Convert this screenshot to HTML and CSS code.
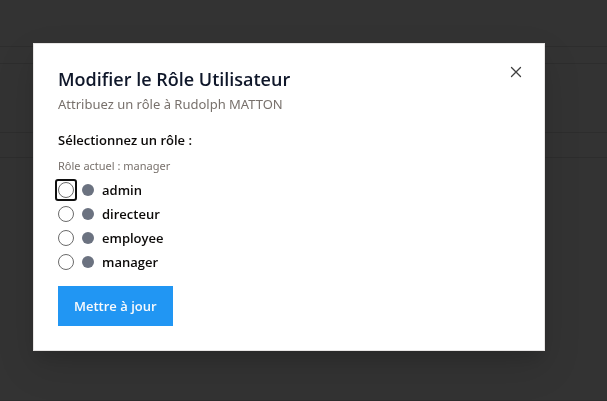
FILE: index.html
```html
<!DOCTYPE html>
<html lang="fr">
<head>
<meta charset="utf-8">
<meta name="viewport" content="width=device-width, initial-scale=1">
<title>Modifier le Rôle Utilisateur</title>
<link rel="stylesheet" href="styles.css">
</head>
<body>
<div class="page" aria-hidden="true">
  <div class="band band-top"></div>
  <div class="band band-gap"></div>
  <div class="band band-panel"></div>
  <div class="band band-row"></div>
  <div class="band band-rest"></div>
</div>
<div class="overlay">
  <section class="dialog" role="dialog" aria-labelledby="title" aria-describedby="subtitle">
    <header class="header">
      <h2 class="title" id="title">Modifier le Rôle Utilisateur</h2>
      <p class="subtitle" id="subtitle">Attribuez un rôle à Rudolph MATTON</p>
    </header>
    <form class="form">
      <fieldset class="roles">
        <legend class="legend">Sélectionnez un rôle :</legend>
        <p class="current">Rôle actuel : manager</p>
        <label class="role"><input class="radio radio-focused" type="radio" name="role" value="admin"><span class="dot"></span>admin</label>
        <label class="role"><input class="radio" type="radio" name="role" value="directeur"><span class="dot"></span>directeur</label>
        <label class="role"><input class="radio" type="radio" name="role" value="employee"><span class="dot"></span>employee</label>
        <label class="role"><input class="radio" type="radio" name="role" value="manager"><span class="dot"></span>manager</label>
      </fieldset>
      <button class="submit" type="button">Mettre à jour</button>
    </form>
    <button class="close" type="button" aria-label="Fermer">
      <svg viewBox="0 0 16 16" width="16" height="16" fill="none" stroke="currentColor" stroke-width="1.3" stroke-linecap="round"><path d="M3.5 3.5l9 9M12.5 3.5l-9 9"/></svg>
    </button>
  </section>
</div>
</body>
</html>
```
FILE: styles.css
```css
* {
  box-sizing: border-box;
}

body {
  margin: 0;
  background: #333333;
  font-family: "Segoe UI", "Open Sans", "Noto Sans", sans-serif;
  font-size: 13px;
  line-height: 20px;
  color: #0c0a09;
}

h2,
p {
  margin: 0;
}

.page {
  position: fixed;
  inset: 0;
  display: flex;
  flex-direction: column;
}

.band {
  border-bottom: 1px solid #2d2d2d;
}

.band-top {
  height: 47px;
}

.band-gap {
  height: 17px;
}

.band-panel {
  height: 69px;
}

.band-row {
  height: 25px;
}

.band-rest {
  flex: 1;
}

.overlay {
  position: relative;
  display: flex;
  align-items: center;
  justify-content: center;
  min-height: 100vh;
  padding: 0 29px 7px 0;
}

.dialog {
  position: relative;
  width: 100%;
  max-width: 512px;
  padding: 24px;
  border: 1px solid #e7e5e4;
  background: #ffffff;
  box-shadow: 0 10px 15px -3px rgba(0, 0, 0, 0.1), 0 16px 36px rgba(0, 0, 0, 0.12);
}

.header {
  display: grid;
  gap: 4px;
}

.title {
  font-size: 18px;
  line-height: 22px;
  font-weight: 600;
  color: #0f172a;
}

.subtitle,
.current {
  font-family: "Segoe UI", "Noto Sans", "Open Sans", sans-serif;
  color: #78716c;
}

.form {
  display: grid;
  gap: 16px;
  justify-items: start;
  margin-top: 16px;
}

.roles {
  display: grid;
  gap: 8px;
  min-width: 0;
  margin: 0;
  padding: 0;
  border: 0;
}

.legend {
  margin-bottom: 8px;
  padding: 0;
  font-weight: 600;
}

.current {
  font-size: 11px;
  line-height: 16px;
}

.role {
  display: flex;
  align-items: center;
  gap: 8px;
  height: 16px;
  font-weight: 600;
}

.radio {
  appearance: none;
  width: 16px;
  height: 16px;
  margin: 0;
  border: 1px solid #6b6b6b;
  border-radius: 50%;
  background: #ffffff;
}

.radio-focused {
  position: relative;
}

.radio-focused::after {
  content: "";
  position: absolute;
  inset: -4px;
  border: 2px solid #101010;
  border-radius: 3px;
}

.dot {
  width: 12px;
  height: 12px;
  border-radius: 50%;
  background: #6b7280;
}

.submit {
  height: 40px;
  padding: 0 16px;
  border: 0;
  background: #2196f3;
  color: #f8fafc;
  font: inherit;
  font-weight: 600;
}

.close {
  position: absolute;
  top: 20px;
  right: 20px;
  display: flex;
  padding: 0;
  border: 0;
  background: none;
  color: #3f3f3f;
}
```
